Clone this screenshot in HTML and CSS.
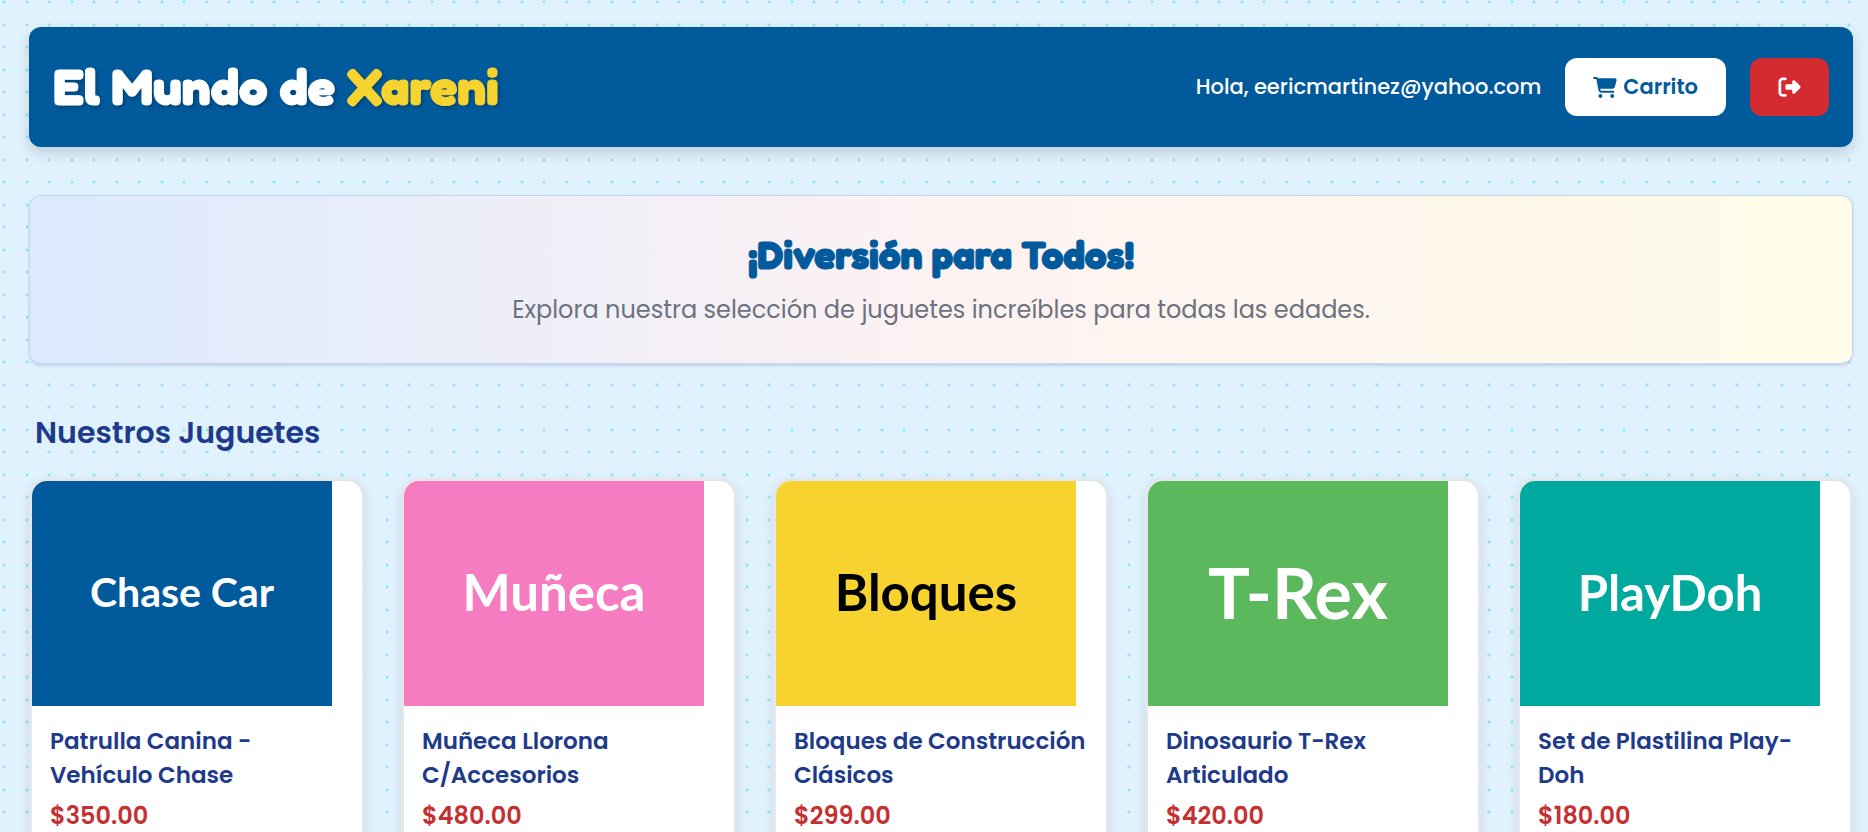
FILE: index.html
```html
<!DOCTYPE html>
<html lang="es">
<head>
<meta charset="utf-8">
<title>El Mundo de Xareni</title>
<link rel="stylesheet" href="styles.css">
</head>
<body>
<div class="page">
  <header class="topbar">
    <h1 class="brand">El Mundo de <span class="brand-accent">Xareni</span></h1>
    <nav class="account">
      <span class="greeting">Hola, eericmartinez@yahoo.com</span>
      <button class="btn btn-cart" type="button">
        <svg class="icon-cart" viewBox="0 0 576 512" aria-hidden="true"><path fill="currentColor" d="M0 24C0 10.7 10.7 0 24 0H69.5c22 0 41.5 12.8 50.6 32h411c26.3 0 45.5 25 38.6 50.4l-41 152.3c-8.5 31.4-37 53.3-69.5 53.3H170.7l5.4 28.5c2.2 11.3 12.1 19.5 23.6 19.5H488c13.3 0 24 10.7 24 24s-10.7 24-24 24H199.7c-34.6 0-64.3-24.6-70.7-58.5L77.4 54.5c-.7-3.8-4-6.5-7.9-6.5H24C10.7 48 0 37.3 0 24zM128 464a48 48 0 1 1 96 0 48 48 0 1 1 -96 0zm336-48a48 48 0 1 1 0 96 48 48 0 1 1 0-96z"/></svg>
        Carrito
      </button>
      <button class="btn btn-exit" type="button" aria-label="Salir">
        <svg class="icon-exit" viewBox="0 0 512 512" aria-hidden="true"><path fill="currentColor" d="M377.9 105.9L500.7 228.7c7.2 7.2 11.3 17.1 11.3 27.3s-4.1 20.1-11.3 27.3L377.9 406.1c-6.4 6.4-15 9.9-24 9.9c-18.7 0-33.9-15.2-33.9-33.9l0-62.1-128 0c-17.7 0-32-14.3-32-32l0-64c0-17.7 14.3-32 32-32l128 0 0-62.1c0-18.7 15.2-33.9 33.9-33.9c9 0 17.6 3.6 24 9.9zM160 96L96 96c-17.7 0-32 14.3-32 32l0 256c0 17.7 14.3 32 32 32l64 0c17.7 0 32 14.3 32 32s-14.3 32-32 32l-64 0c-53 0-96-43-96-96L0 128C0 75 43 32 96 32l64 0c17.7 0 32 14.3 32 32s-14.3 32-32 32z"/></svg>
      </button>
    </nav>
  </header>
  <main>
    <section class="hero">
      <h2 class="hero-title">¡Diversión para Todos!</h2>
      <p class="hero-text">Explora nuestra selección de juguetes increíbles para todas las edades.</p>
    </section>
    <h2 class="section-title">Nuestros Juguetes</h2>
    <div class="products">
      <article class="card">
        <div class="thumb thumb-blue">Chase Car</div>
        <div class="card-body"><h3 class="card-title">Patrulla Canina - Vehículo Chase</h3><p class="price">$350.00</p></div>
      </article>
      <article class="card">
        <div class="thumb thumb-pink">Muñeca</div>
        <div class="card-body"><h3 class="card-title">Muñeca Llorona C/Accesorios</h3><p class="price">$480.00</p></div>
      </article>
      <article class="card">
        <div class="thumb thumb-yellow">Bloques</div>
        <div class="card-body"><h3 class="card-title">Bloques de Construcción Clásicos</h3><p class="price">$299.00</p></div>
      </article>
      <article class="card">
        <div class="thumb thumb-green">T-Rex</div>
        <div class="card-body"><h3 class="card-title">Dinosaurio T-Rex Articulado</h3><p class="price">$420.00</p></div>
      </article>
      <article class="card">
        <div class="thumb thumb-teal">PlayDoh</div>
        <div class="card-body"><h3 class="card-title">Set de Plastilina Play-Doh</h3><p class="price">$180.00</p></div>
      </article>
    </div>
  </main>
</div>
</body>
</html>
```
FILE: styles.css
```css
* { box-sizing: border-box; }
h1, h2, h3, p { margin: 0; }

html { height: 100%; overflow: hidden; }

body {
  margin: 0;
  height: 100%;
  overflow: hidden;
  font-family: Poppins, Inter, sans-serif;
  background-color: #e0f2fe;
  background-image:
    radial-gradient(circle at 4px 2px, #92e6ef 1px, transparent 2px),
    radial-gradient(circle at 27px 2px, #92e6ef 1px, transparent 2px),
    radial-gradient(circle at 4px 25px, #92e6ef 1px, transparent 2px),
    radial-gradient(circle at 27px 25px, #92e6ef 1px, transparent 2px);
  background-size: 45px 45px;
}

.page { padding: 27px 15px 0 29px; }

.topbar {
  display: flex;
  align-items: center;
  justify-content: space-between;
  min-height: 120px;
  padding: 24px;
  border-radius: 12px;
  background: #005a9c;
  color: #fff;
  box-shadow: 0 6px 14px rgba(0, 0, 0, .15);
}

.brand {
  padding-bottom: 3px;
  font-family: "Fredoka One", Fredoka, Inter, sans-serif;
  font-size: 51px;
  font-weight: 700;
  line-height: 60px;
  -webkit-text-stroke: 1px currentColor;
  text-shadow: 2px 2px 4px rgba(0, 0, 0, .3);
}
.brand-accent { color: #f7d330; }

.account { display: flex; align-items: center; gap: 24px; }
.greeting { font-size: 21px; font-weight: 500; line-height: 30px; }

.btn {
  display: flex;
  align-items: center;
  justify-content: center;
  height: 58px;
  padding: 0 28px;
  border: 0;
  border-radius: 12px;
  font: 600 21px/30px Poppins, Inter, sans-serif;
  gap: 6px;
}
.btn-cart { background: #fff; color: #005a9c; }
.btn-exit { background: #d32b2f; color: #fff; }
.icon-cart { width: 24px; height: 21px; }
.icon-exit { width: 23px; height: 22px; }

.hero {
  margin-top: 48px;
  padding: 35px 24px;
  border: 1px solid #c3d7f5;
  border-bottom-width: 2px;
  border-radius: 12px;
  background: linear-gradient(to right, #dbeafe, #fef2f2 50%, #fefce8);
  box-shadow: 0 1px 3px rgba(0, 0, 0, .12);
  text-align: center;
}
.hero-title {
  font-family: "Fredoka One", Fredoka, Inter, sans-serif;
  font-size: 39px;
  font-weight: 700;
  line-height: 48px;
  color: #005a9c;
  -webkit-text-stroke: 1px currentColor;
}
.hero-text {
  margin-top: 13px;
  font-size: 24px;
  line-height: 36px;
  color: #6b7280;
}

.section-title {
  margin: 48px 0 25px;
  padding-left: 6px;
  font-size: 30px;
  font-weight: 600;
  line-height: 40px;
  color: #1e3a8a;
}

.products {
  display: grid;
  grid-template-columns: repeat(5, 1fr);
  gap: 36px;
}
.card {
  min-height: 480px;
  border: 3px solid #e3e6eb;
  border-radius: 18px;
  background: #fff;
  overflow: hidden;
  box-shadow: 0 4px 12px rgba(0, 0, 0, .1);
}
.thumb {
  display: flex;
  align-items: center;
  justify-content: center;
  width: 300px;
  max-width: 100%;
  height: 225px;
  padding-bottom: 4px;
  font-family: Lato, sans-serif;
  font-weight: 700;
  color: #fff;
}
.thumb-blue { background: #005a9c; font-size: 41px; }
.thumb-pink { background: #f57cc1; font-size: 51px; }
.thumb-yellow { background: #f7d330; font-size: 51px; color: #000; }
.thumb-green { background: #5cb85c; font-size: 70px; }
.thumb-teal { background: #00a99d; font-size: 49px; }

.card-body { padding: 18px; }
.card-title {
  font-size: 23px;
  font-weight: 600;
  line-height: 34px;
  color: #1e3a8a;
}
.price {
  margin-top: 6px;
  font-size: 24px;
  font-weight: 600;
  line-height: 36px;
  color: #c53030;
}
```
